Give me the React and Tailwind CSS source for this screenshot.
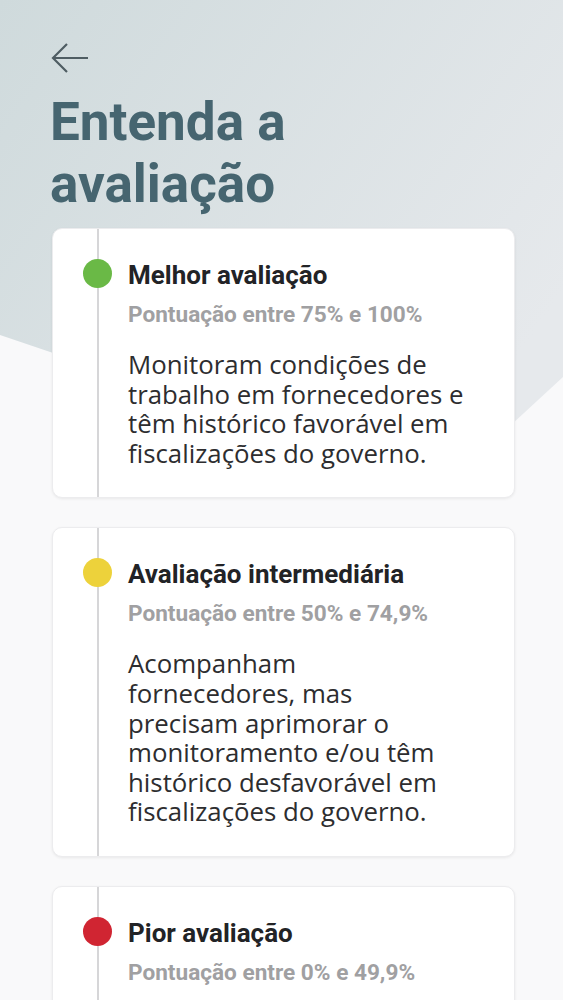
import React from "react";

const cards = [
  {
    color: "bg-[#6ab946]",
    title: "Melhor avaliação",
    range: "Pontuação entre 75% e 100%",
    lines: [
      "Monitoram condições de",
      "trabalho em fornecedores e",
      "têm histórico favorável em",
      "fiscalizações do governo.",
    ],
  },
  {
    color: "bg-[#edd23b]",
    title: "Avaliação intermediária",
    range: "Pontuação entre 50% e 74,9%",
    lines: [
      "Acompanham",
      "fornecedores, mas",
      "precisam aprimorar o",
      "monitoramento e/ou têm",
      "histórico desfavorável em",
      "fiscalizações do governo.",
    ],
  },
  {
    color: "bg-[#d02532]",
    title: "Pior avaliação",
    range: "Pontuação entre 0% e 49,9%",
    lines: [
      "Não monitoram condições",
      "de trabalho em",
      "fornecedores e têm",
      "histórico desfavorável em",
      "fiscalizações do governo.",
    ],
  },
];

function Card({ c }) {
  return (
    <div className="relative flex rounded-[10px] bg-white border border-[#ececee] shadow-[0_1px_3px_rgba(0,0,0,0.07)] pb-[29px]">
      <div className="absolute left-[44px] top-0 bottom-0 w-[2px] bg-[#d6d6d8]" />
      <div className="relative pl-[30px] pt-[30px] w-[75px] shrink-0">
        <div className={`w-[29px] h-[29px] rounded-full ${c.color}`} />
      </div>
      <div className="pt-[31px] pr-4 min-w-0">
        <div
          className="text-[26px] leading-[30px] font-bold text-[#222326] whitespace-nowrap"
          style={{ fontFamily: "Roboto, sans-serif" }}
        >
          {c.title}
        </div>
        <div
          className="mt-[10px] text-[22.6px] leading-[30px] font-bold text-[#a0a0a2] whitespace-nowrap"
          style={{ fontFamily: "Roboto, sans-serif" }}
        >
          {c.range}
        </div>
        <div
          className="mt-[20px] text-[25.8px] leading-[29.6px] text-[#2d2d2f] whitespace-nowrap"
          style={{ fontFamily: "'Open Sans', sans-serif" }}
        >
          {c.lines.map((l, i) => (
            <div key={i}>{l}</div>
          ))}
        </div>
      </div>
    </div>
  );
}

export default function App() {
  return (
    <div className="relative min-h-[1000px] w-full overflow-hidden bg-[#f9f9fa]">
      <svg
        className="absolute left-0 top-0"
        width="563"
        height="520"
        viewBox="0 0 563 520"
      >
        <defs>
          <linearGradient id="bg" x1="0" y1="0" x2="1" y2="0.6">
            <stop offset="0" stopColor="#cfdadc" />
            <stop offset="1" stopColor="#e6e9ec" />
          </linearGradient>
        </defs>
        <path d="M0 0 H563 V377 L445 486 L0 335 Z" fill="url(#bg)" />
      </svg>
      <div className="relative pl-[52px] pr-[48px] pt-[42px] pb-10">
        <svg width="38" height="32" viewBox="0 0 38 32" className="-ml-[1px]">
          <path
            d="M37 16 H2 M16 2 L2 16 L16 30"
            fill="none"
            stroke="#4f5d63"
            strokeWidth="2.2"
          />
        </svg>
        <h1
          className="mt-[17px] text-[53px] leading-[62px] font-bold text-[#466570] -ml-[2px]"
          style={{ fontFamily: "Roboto, sans-serif" }}
        >
          Entenda a<br />avaliação
        </h1>
        <div className="mt-[13px] flex flex-col gap-[29px]">
          {cards.map((c, i) => (
            <Card key={i} c={c} />
          ))}
        </div>
      </div>
    </div>
  );
}
